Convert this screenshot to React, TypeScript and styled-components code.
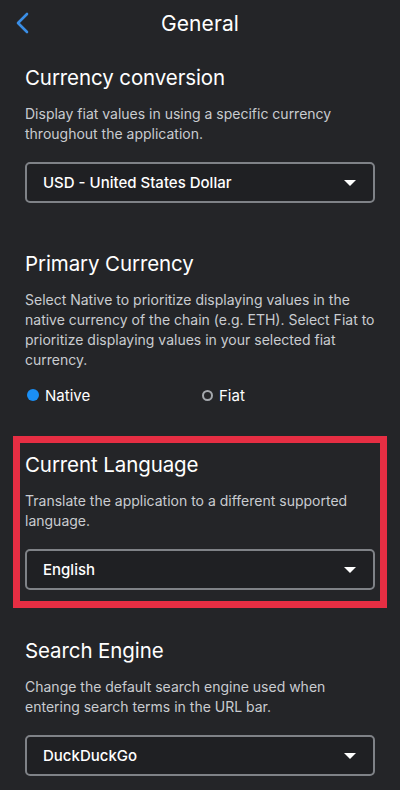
import React from 'react'
import styled, { createGlobalStyle } from 'styled-components'

const GlobalStyle = createGlobalStyle`
  html, body {
    margin: 0;
    padding: 0;
    background: #242528;
  }
  body {
    font-family: 'Inter', 'Noto Sans', sans-serif;
    color: #ffffff;
    -webkit-font-smoothing: antialiased;
  }
`

const Page = styled.div`
  width: 400px;
  min-height: 790px;
  background: #242528;
  overflow: hidden;
`

const Header = styled.header`
  display: grid;
  grid-template-columns: 48px 1fr 48px;
  align-items: center;
  height: 46px;
`

const BackButton = styled.button`
  display: flex;
  align-items: center;
  justify-content: flex-start;
  padding: 0 0 0 15px;
  background: none;
  border: none;
  color: #3a8ee6;
  cursor: pointer;
`

const Title = styled.h1`
  margin: 0;
  text-align: center;
  font-size: 21px;
  font-weight: 400;
  letter-spacing: 0.1px;
`

const Content = styled.main`
  display: flex;
  flex-direction: column;
  gap: 47px;
  padding: 18px 25px 0;
`

// the highlighted section gets a red frame that sits around it without moving anything
const Section = styled.section<{ $highlight?: boolean }>`
  display: flex;
  flex-direction: column;
  ${(p) =>
    p.$highlight &&
    `
    padding: 8px 5px 11px;
    margin: -8px -5px -11px;
    outline: 7px solid #e62e43;
  `}
`

const Heading = styled.h2`
  margin: 0 0 12px;
  font-size: 20.5px;
  font-weight: 400;
  line-height: 28px;
  letter-spacing: -0.1px;
`

const Description = styled.p`
  margin: 0 0 18px;
  font-size: 14px;
  line-height: 20px;
  color: #c9ccd0;
`

const Select = styled.div`
  display: flex;
  align-items: center;
  justify-content: space-between;
  height: 41px;
  box-sizing: border-box;
  padding: 0 17px 0 16px;
  border: 2px solid #7f8287;
  border-radius: 5px;
  background: #1f2023;
  font-size: 15px;
  font-weight: 500;
  color: #ffffff;
`

const Caret = styled.span`
  width: 0;
  height: 0;
  border-left: 6px solid transparent;
  border-right: 6px solid transparent;
  border-top: 6px solid #ffffff;
`

const RadioRow = styled.div`
  display: grid;
  grid-template-columns: 175px 1fr;
  margin-top: -2px;
  padding-left: 2px;
`

const RadioOption = styled.label`
  display: flex;
  align-items: center;
  gap: 6px;
  height: 18px;
  font-size: 15px;
  color: #ffffff;
`

const RadioDot = styled.span<{ $checked?: boolean }>`
  width: ${(p) => (p.$checked ? 12 : 11)}px;
  height: ${(p) => (p.$checked ? 12 : 11)}px;
  box-sizing: border-box;
  border-radius: 50%;
  background: ${(p) => (p.$checked ? '#1a8ff5' : 'transparent')};
  border: ${(p) => (p.$checked ? 'none' : '2px solid #a4a8ad')};
`

const Chevron = () => (
  <svg width="16" height="22" viewBox="0 0 16 22" fill="none">
    <path d="M12 2 L3 11 L12 20" stroke="currentColor" strokeWidth="2.6" strokeLinecap="round" strokeLinejoin="round" />
  </svg>
)

const Dropdown = ({ value }: { value: string }) => (
  <Select>
    <span>{value}</span>
    <Caret />
  </Select>
)

export default function App() {
  return (
    <Page>
      <GlobalStyle />
      <Header>
        <BackButton aria-label="Back">
          <Chevron />
        </BackButton>
        <Title>General</Title>
        <span />
      </Header>
      <Content>
        <Section>
          <Heading>Currency conversion</Heading>
          <Description>
            Display fiat values in using a specific currency throughout the application.
          </Description>
          <Dropdown value="USD - United States Dollar" />
        </Section>
        <Section>
          <Heading>Primary Currency</Heading>
          <Description>
            Select Native to prioritize displaying values in the native currency of the chain (e.g. ETH). Select Fiat to
            prioritize displaying values in your selected fiat currency.
          </Description>
          <RadioRow>
            <RadioOption>
              <RadioDot $checked />
              Native
            </RadioOption>
            <RadioOption>
              <RadioDot />
              Fiat
            </RadioOption>
          </RadioRow>
        </Section>
        <Section $highlight>
          <Heading>Current Language</Heading>
          <Description>Translate the application to a different supported language.</Description>
          <Dropdown value="English" />
        </Section>
        <Section>
          <Heading>Search Engine</Heading>
          <Description>Change the default search engine used when entering search terms in the URL bar.</Description>
          <Dropdown value="DuckDuckGo" />
        </Section>
      </Content>
    </Page>
  )
}
